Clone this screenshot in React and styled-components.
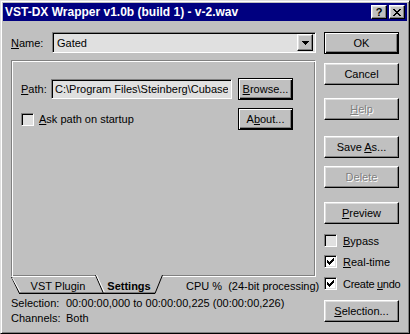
import React from 'react';
import styled, { createGlobalStyle, css } from 'styled-components';

const GlobalStyle = createGlobalStyle`
  html, body {
    margin: 0;
    padding: 0;
    background: #c0c0c0;
  }
  body {
    font-family: "Liberation Sans", Arial, sans-serif;
    font-size: 11px;
    color: #000;
  }
`;

const raised = css`
  border: 1px solid;
  border-color: #fff #000 #000 #fff;
  box-shadow: inset -1px -1px #808080, inset 1px 1px #dfdfdf;
`;

const sunken = css`
  border: 1px solid;
  border-color: #808080 #fff #fff #808080;
  box-shadow: inset 1px 1px #000, inset -1px -1px #dfdfdf;
`;

const Window = styled.div`
  box-sizing: border-box;
  width: 410px;
  height: 334px;
  padding: 2px;
  background: #c0c0c0;
  border: 1px solid;
  border-color: #dfdfdf #000 #000 #dfdfdf;
  box-shadow: inset 1px 1px #fff, inset -1px -1px #808080;
  display: flex;
  flex-direction: column;
`;

const TitleBar = styled.div`
  height: 18px;
  background: #000080;
  color: #fff;
  font-weight: bold;
  font-size: 12px;
  display: flex;
  align-items: center;
  padding: 0 2px;
`;

const TitleText = styled.span`
  flex: 1;
  white-space: nowrap;
`;

const TitleButtons = styled.div`
  display: flex;
  gap: 2px;
`;

const TitleButton = styled.div`
  box-sizing: border-box;
  width: 16px;
  height: 14px;
  background: #c0c0c0;
  ${raised};
  display: flex;
  align-items: center;
  justify-content: center;
  color: #000;
  font-weight: bold;
  font-size: 11px;
  line-height: 1;
`;

const Body = styled.div`
  display: flex;
  gap: 8px;
  padding: 11px 8px 0 8px;
`;

const LeftCol = styled.div`
  width: 305px;
  display: flex;
  flex-direction: column;
`;

const RightCol = styled.div`
  width: 75px;
  display: flex;
  flex-direction: column;
`;

const NameRow = styled.div`
  display: flex;
  align-items: center;
  height: 21px;
`;

const Label = styled.span`
  width: ${p => p.$w}px;
  flex: none;
  white-space: nowrap;
`;

const Key = styled.span`
  text-decoration: underline;
`;

const Combo = styled.div`
  box-sizing: border-box;
  flex: 1;
  height: 21px;
  background: #e0e0e0;
  ${sunken};
  display: flex;
  align-items: center;
  padding: 2px 2px 2px 4px;
`;

const FieldText = styled.span`
  flex: 1;
  overflow: hidden;
  white-space: nowrap;
`;

const DropButton = styled.div`
  box-sizing: border-box;
  width: 16px;
  height: 17px;
  background: #c0c0c0;
  ${raised};
  display: flex;
  align-items: center;
  justify-content: center;
`;

const Panel = styled.div`
  box-sizing: border-box;
  margin-top: 7px;
  height: 217px;
  border: 1px solid;
  border-color: #808080 #fff #fff #808080;
  box-shadow: inset 1px 1px #fff, inset -1px -1px #808080;
  padding: 17px 0 0 9px;
`;

const PathRow = styled.div`
  width: 272px;
  display: flex;
  align-items: center;
  height: 22px;
`;

const TextField = styled.div`
  box-sizing: border-box;
  width: 181px;
  height: 20px;
  margin-right: 6px;
  background: #e0e0e0;
  ${sunken};
  display: flex;
  align-items: center;
  padding: 0 3px;
  overflow: hidden;
`;

const OptionRow = styled.div`
  width: 272px;
  margin-top: 8px;
  display: flex;
  align-items: center;
  justify-content: space-between;
  height: 22px;
`;

const Button = styled.button`
  box-sizing: border-box;
  width: ${p => p.$w || 75}px;
  height: 22px;
  margin: ${p => p.$top || 0}px 0 0 0;
  padding: 0;
  font: inherit;
  color: #000;
  background: #c0c0c0;
  ${raised};
  ${p => p.$default && css`
    border-color: #000;
    box-shadow: inset 1px 1px #fff, inset -1px -1px #000, inset -2px -2px #808080;
  `}
  ${p => p.disabled && css`
    color: #808080;
    text-shadow: 1px 1px #fff;
  `}
`;

const CheckRow = styled.label`
  display: flex;
  align-items: center;
  gap: ${p => p.$gap || 6}px;
  height: 13px;
  margin-top: ${p => p.$top || 0}px;
  white-space: nowrap;
  letter-spacing: ${p => p.$tight ? -0.3 : 0}px;
`;

const Box = styled.span`
  box-sizing: border-box;
  width: 13px;
  height: 13px;
  flex: none;
  background: ${p => p.$fill};
  ${sunken};
  display: block;
`;

const TabStrip = styled.div`
  display: flex;
  align-items: flex-start;
  height: 17px;
`;

const Tab = styled.div`
  position: relative;
  flex: none;
  width: ${p => p.$w}px;
  height: ${p => (p.$active ? 19 : 17)}px;
  margin: ${p => (p.$active ? -2 : 0)}px 0 0 ${p => p.$ml || 0}px;
  z-index: ${p => (p.$active ? 2 : 1)};
  font-weight: ${p => (p.$active ? 'bold' : 'normal')};
  display: flex;
  align-items: center;
  justify-content: center;
  padding-top: ${p => (p.$active ? 2 : 0)}px;
  box-sizing: border-box;
`;

const TabShape = styled.svg`
  position: absolute;
  left: 0;
  top: 0;
`;

const TabLabel = styled.span`
  position: relative;
  padding-left: ${p => p.$pl || 0}px;
`;

const CpuText = styled.span`
  margin: 3px 0 0 23px;
  white-space: pre;
`;

const Info = styled.div`
  margin-top: 2px;
  display: grid;
  grid-template-columns: 55px auto;
  line-height: 15px;
  white-space: nowrap;
`;

const CheckMark = () => (
  <svg width="11" height="11" viewBox="0 0 11 11" style={{ display: 'block' }} shapeRendering="crispEdges">
    {[2, 3, 4, 3, 2, 1, 0].map((y, i) => (
      <rect key={i} x={2 + i} y={2 + y} width="1" height="3" fill="#000" />
    ))}
  </svg>
);

const Check = ({ checked, fill, children, top, gap, tight }) => (
  <CheckRow $top={top} $gap={gap} $tight={tight}>
    <Box $fill={fill}>{checked && <CheckMark />}</Box>
    <span>{children}</span>
  </CheckRow>
);

const CloseGlyph = () => (
  <svg width="8" height="7" viewBox="0 0 8 7" shapeRendering="crispEdges">
    {[[0, 6], [1, 5], [2, 4], [3, 3], [2, 4], [1, 5], [0, 6]].map(([a, b], y) => (
      <g key={y} fill="#000">
        <rect x={a} y={y} width="2" height="1" />
        <rect x={b} y={y} width="2" height="1" />
      </g>
    ))}
  </svg>
);

const DownArrow = () => (
  <svg width="7" height="4" viewBox="0 0 7 4" shapeRendering="crispEdges">
    <polygon points="0,0 7,0 3.5,4" fill="#000" />
  </svg>
);

const TabOutline = ({ w, h, left = 8, right = 8, active }) => (
  <TabShape width={w} height={h} viewBox={`0 0 ${w} ${h}`}>
    <polygon points={`0,0 ${left},${h - 1} ${w - right},${h - 1} ${w},0`} fill="#c0c0c0" />
    <line x1="0.5" y1="0" x2={left + 0.5} y2={h - 0.5} stroke="#000" />
    <line x1="1.5" y1={active ? 0 : 1} x2={left + 1.5} y2={h - 1.5} stroke="#fff" />
    <line x1={left} y1={h - 0.5} x2={w - right} y2={h - 0.5} stroke="#000" />
    <line x1={left + 1} y1={h - 1.5} x2={w - right} y2={h - 1.5} stroke="#808080" />
    {right > 0 && (
      <line x1={w - right} y1={h - 0.5} x2={w - 0.5} y2="0" stroke="#000" />
    )}
  </TabShape>
);

export default function App() {
  return (
    <Window>
      <GlobalStyle />
      <TitleBar>
        <TitleText>VST-DX Wrapper v1.0b (build 1) - v-2.wav</TitleText>
        <TitleButtons>
          <TitleButton>?</TitleButton>
          <TitleButton><CloseGlyph /></TitleButton>
        </TitleButtons>
      </TitleBar>
      <Body>
        <LeftCol>
          <NameRow>
            <Label $w={41}><Key>N</Key>ame:</Label>
            <Combo>
              <FieldText>Gated</FieldText>
              <DropButton><DownArrow /></DropButton>
            </Combo>
          </NameRow>
          <Panel>
            <PathRow>
              <Label $w={30}><Key>P</Key>ath:</Label>
              <TextField><FieldText>C:\Program Files\Steinberg\Cubase</FieldText></TextField>
              <Button $w={55} $default><Key>B</Key>rowse...</Button>
            </PathRow>
            <OptionRow>
              <Check fill="#e0e0e0" gap={5}><Key>A</Key>sk path on startup</Check>
              <Button $w={55} $default>A<Key>b</Key>out...</Button>
            </OptionRow>
          </Panel>
          <TabStrip>
            <Tab $w={92}>
              <TabOutline w={92} h={17} right={0} />
              <TabLabel $pl={2}>VST Plugin</TabLabel>
            </Tab>
            <Tab $w={68} $ml={-8} $active>
              <TabOutline w={68} h={19} active />
              <TabLabel>Settings</TabLabel>
            </Tab>
            <CpuText>CPU %  (24-bit processing)</CpuText>
          </TabStrip>
          <Info>
            <span>Selection:</span>
            <span>00:00:00,000 to 00:00:00,225 (00:00:00,226)</span>
            <span>Channels:</span>
            <span>Both</span>
          </Info>
        </LeftCol>
        <RightCol>
          <Button $default>OK</Button>
          <Button $top={9}>Cancel</Button>
          <Button $top={13} disabled><Key>H</Key>elp</Button>
          <Button $top={16}>Save <Key>A</Key>s...</Button>
          <Button $top={8} disabled>Delete</Button>
          <Button $top={14}><Key>P</Key>review</Button>
          <Check top={10} fill="#e0e0e0"><Key>B</Key>ypass</Check>
          <Check top={8} fill="#fff" checked><Key>R</Key>eal-time</Check>
          <Check top={9} fill="#fff" checked tight>Create <Key>u</Key>ndo</Check>
          <Button $top={10}><Key>S</Key>election...</Button>
        </RightCol>
      </Body>
    </Window>
  );
}
